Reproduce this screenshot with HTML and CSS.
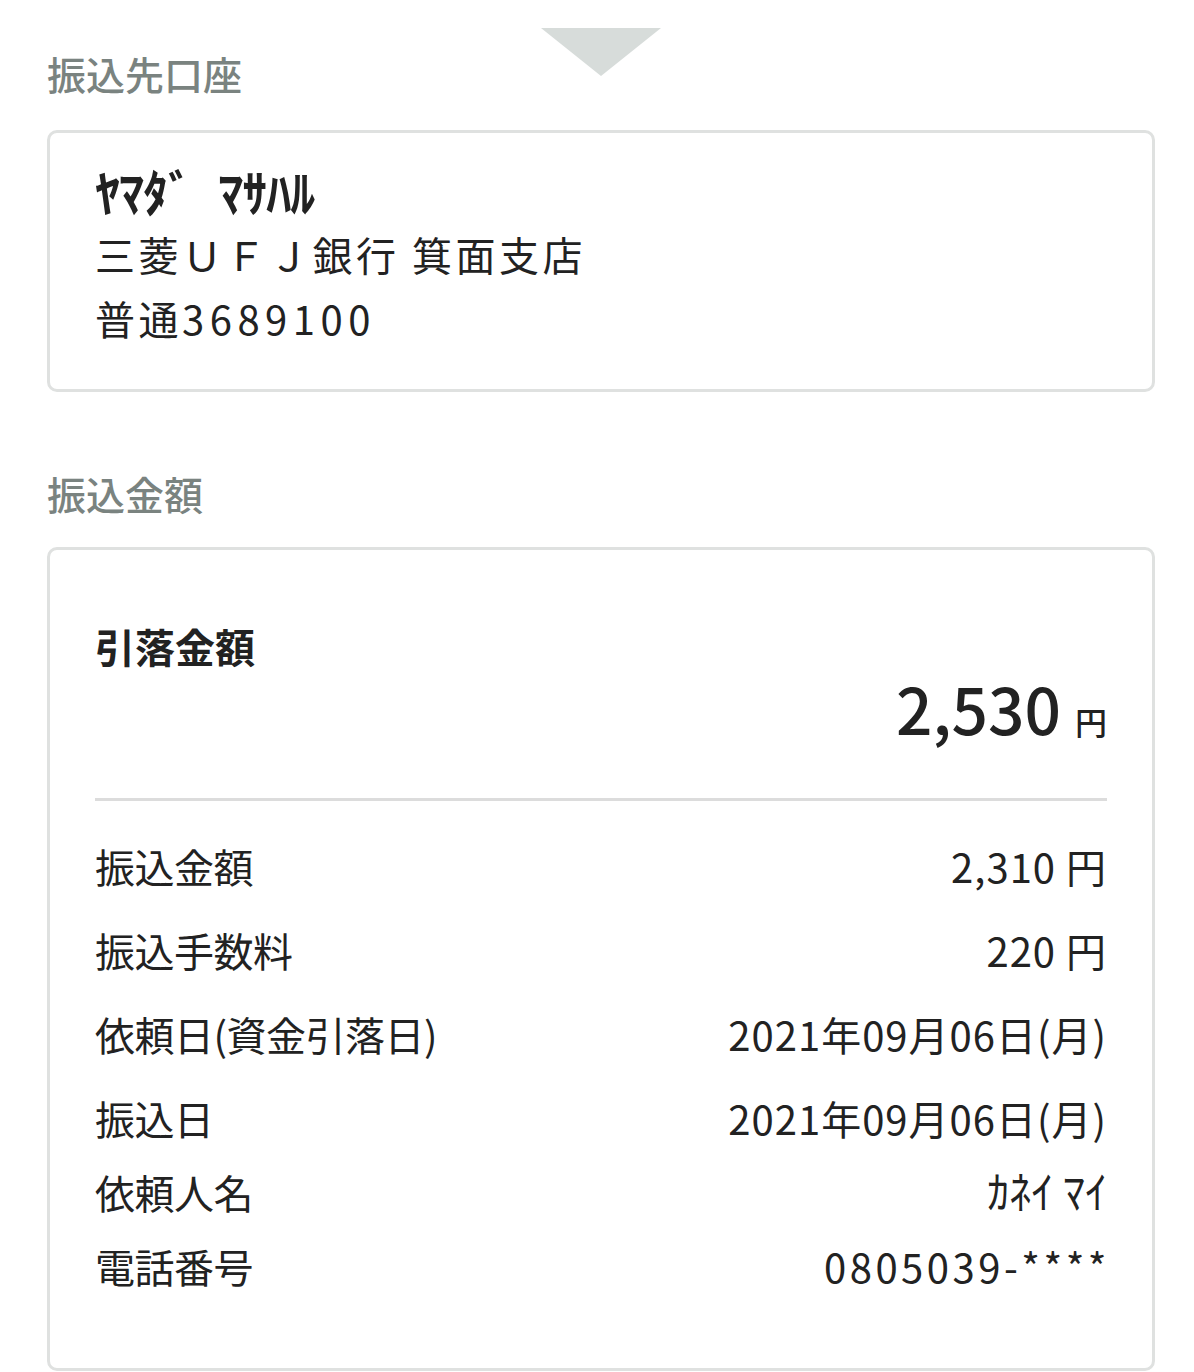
FILE: index.html
```html
<!DOCTYPE html>
<html lang="ja">
  <head>
    <meta charset="UTF-8" />
    <meta name="viewport" content="width=device-width, initial-scale=1.0" />
    <title>振込内容確認</title>
    <link rel="stylesheet" href="styles.css">
  </head>
  <body>
    <div class="page">
      <div class="top">
        <div class="arrow"></div>
        <h2 class="section-title section-title--first">振込先口座</h2>
      </div>

      <div class="card account">
        <p class="account-name">ﾔﾏﾀﾞ ﾏｻﾊﾙ</p>
        <p>三菱ＵＦＪ銀行 箕面支店</p>
        <p>普通<span class="account-no">3689100</span></p>
      </div>

      <h2 class="section-title">振込金額</h2>

      <div class="card summary">
        <p class="summary-title">引落金額</p>
        <p class="total">2,530<span class="yen">円</span></p>

        <div class="divider"></div>

        <div class="row row--wide">
          <span class="label">振込金額</span>
          <span class="value">2,310 円</span>
        </div>
        <div class="row row--wide">
          <span class="label">振込手数料</span>
          <span class="value">220 円</span>
        </div>
        <div class="row row--wide">
          <span class="label">依頼日(資金引落日)</span>
          <span class="value">2021年09月06日(月)</span>
        </div>
        <div class="row">
          <span class="label">振込日</span>
          <span class="value">2021年09月06日(月)</span>
        </div>
        <div class="row">
          <span class="label">依頼人名</span>
          <span class="value value--kana">ｶﾈｲ ﾏｲ</span>
        </div>
        <div class="row">
          <span class="label">電話番号</span>
          <span class="value value--tel">0805039-****</span>
        </div>
      </div>
    </div>
  </body>
</html>
```

FILE: styles.css
```css
* {
  margin: 0;
  padding: 0;
  box-sizing: border-box;
  font-family: "Noto Sans CJK JP", "Noto Sans", sans-serif;
}

body {
  background-color: #fff;
  color: #222;
}

.page {
  padding: 28px 39px 0 47px;
}

.top {
  display: grid;
}

.top > * {
  grid-area: 1 / 1;
}

.arrow {
  justify-self: center;
  width: 0;
  height: 0;
  border-left: 60px solid transparent;
  border-right: 60px solid transparent;
  border-top: 48px solid #d7dcda;
}

.section-title {
  font-size: 39px;
  line-height: 47px;
  font-weight: 500;
  color: #7a8380;
  margin: 78px 0 30px;
}

.section-title--first {
  margin: 22px 0 0;
}

.card {
  border: 3px solid #dfe1e0;
  border-radius: 10px;
  background-color: #fff;
}

.account {
  margin-top: 33px;
  padding: 25px 45px 39px;
  font-size: 40px;
  line-height: 64px;
  letter-spacing: 3.5px;
}

.account .account-name {
  font-size: 50px;
  font-weight: 700;
  letter-spacing: -1px;
  word-spacing: 16px;
}

.account-no {
  letter-spacing: 5.5px;
}

.summary {
  padding: 68px 45px 65px;
}

.summary-title {
  font-size: 40px;
  line-height: 56px;
  font-weight: 700;
}

.total {
  display: flex;
  justify-content: flex-end;
  align-items: baseline;
  font-size: 64px;
  line-height: 66px;
  font-weight: 500;
}

.total .yen {
  font-size: 32px;
  line-height: 1;
  margin-left: 14px;
}

.divider {
  border-top: 3px solid #dcdcdc;
  margin: 58px 0 28px;
}

.row {
  display: flex;
  justify-content: space-between;
  align-items: baseline;
  font-size: 40px;
  line-height: 74px;
}

.row--wide {
  margin-bottom: 10px;
}

.label {
  letter-spacing: -0.5px;
}

.value {
  letter-spacing: 1px;
}

.value--kana {
  font-size: 44px;
  line-height: 1;
  letter-spacing: 0;
}

.value--tel {
  letter-spacing: 3.5px;
  margin-right: -3px;
}
```
